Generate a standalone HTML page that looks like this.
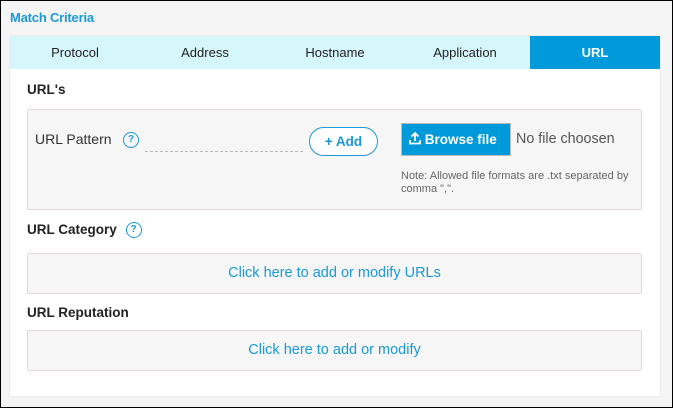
<!DOCTYPE html>
<html><head><meta charset="utf-8"><style>
*{box-sizing:border-box;margin:0;padding:0}
body{width:673px;height:408px;overflow:hidden;font-family:"Liberation Sans",sans-serif;background:#f5f5f5}
.frame{position:absolute;left:0;top:0;width:673px;height:408px;border:1px solid #000;background:#f5f5f5}
.title{position:absolute;left:10px;top:10px;font-size:13px;font-weight:bold;color:#1a9ad6;letter-spacing:-0.2px}
.panel{position:absolute;left:10px;top:36px;width:650px;height:360px;background:#fff;box-shadow:0 0 2px #ddd}
.tabs{position:absolute;left:0;top:0;width:650px;height:33px;background:#d5f6fb;display:flex}
.tab{width:130px;text-align:center;line-height:33px;font-size:13px;color:#222}
.tab.act{background:#0099da;color:#fff;font-weight:bold}
.h{position:absolute;left:17px;font-size:13.5px;font-weight:bold;color:#222}
.box{position:absolute;left:17px;width:615px;background:#f6f6f6;border:1px solid #e3d9d9;border-radius:2px}
.link{text-align:center;color:#1a9ad6;font-size:14.5px}
.q{display:inline-block;width:16px;height:16px;border:1.5px solid #1a9ad6;border-radius:50%;color:#1a9ad6;font-size:10px;font-weight:bold;text-align:center;line-height:13px;vertical-align:middle}
</style></head><body>
<div class="frame"></div>
<div class="title">Match Criteria</div>
<div class="panel">
 <div class="tabs"><div class="tab">Protocol</div><div class="tab">Address</div><div class="tab">Hostname</div><div class="tab">Application</div><div class="tab act">URL</div></div>
 <div class="h" style="top:46px">URL's</div>
 <div class="box" style="top:73px;height:101px">
  <div style="position:absolute;left:7px;top:21px;font-size:14px;color:#333">URL Pattern</div>
  <div class="q" style="position:absolute;left:95px;top:22px">?</div>
  <div style="position:absolute;left:117px;top:41px;width:158px;border-top:1px dashed #bbb"></div>
  <div style="position:absolute;left:281px;top:17px;width:69px;height:29px;border:1px solid #1a9ad6;border-radius:15px;background:#fff;color:#1a9ad6;font-size:13.5px;font-weight:bold;text-align:center;line-height:27px">+ Add</div>
  <div style="position:absolute;left:373px;top:13px;width:110px;height:33px;background:#0099da;border:1px solid #bbb;color:#fff;font-weight:bold;font-size:13.5px;line-height:31px;padding-left:7px;white-space:nowrap">
   <svg width="12" height="13" viewBox="0 0 12 13" style="vertical-align:-1px"><path d="M6 1v8M2.5 4.5L6 1l3.5 3.5M1 8v3.5h10V8" fill="none" stroke="#fff" stroke-width="1.8"/></svg> Browse file</div>
  <div style="position:absolute;left:488px;top:21px;font-size:14.3px;color:#555">No file choosen</div>
  <div style="position:absolute;left:373px;top:60px;font-size:11px;color:#666;line-height:13px">Note: Allowed file formats are .txt separated by<br>comma ",".</div>
 </div>
 <div class="h" style="top:186px">URL Category <span class="q" style="margin-left:5px">?</span></div>
 <div class="box link" style="top:217px;height:41px;line-height:39px">Click here to add or modify URLs</div>
 <div class="h" style="top:269px">URL Reputation</div>
 <div class="box link" style="top:294px;height:41px;line-height:39px">Click here to add or modify</div>
</div>
</body></html>
